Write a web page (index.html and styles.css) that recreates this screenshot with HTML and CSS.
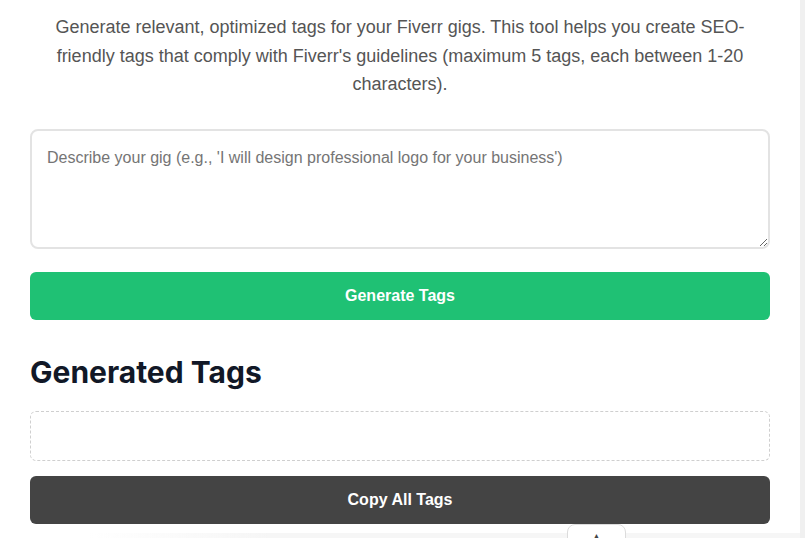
FILE: index.html
```html
<!DOCTYPE html>
<html lang="en">
<head>
<meta charset="utf-8">
<title>Fiverr Tag Generator</title>
<link rel="stylesheet" href="styles.css">
</head>
<body>
<main class="tool">
  <p class="intro">Generate relevant, optimized tags for your Fiverr gigs. This tool helps you create SEO-friendly tags that comply with Fiverr's guidelines (maximum 5 tags, each between 1-20 characters).</p>
  <textarea class="gig-input" placeholder="Describe your gig (e.g., 'I will design professional logo for your business')"></textarea>
  <button class="btn btn-generate" type="button">Generate Tags</button>
  <h2 class="result-title">Generated Tags</h2>
  <div class="tag-box"></div>
  <button class="btn btn-copy" type="button">Copy All Tags</button>
</main>
<div class="bottom-shade"></div>
<button class="back-top" type="button" aria-label="Back to top">&#9650;</button>
<div class="side-strip"></div>
</body>
</html>
```
FILE: styles.css
```css
* { box-sizing: border-box; }
html, body { margin: 0; padding: 0; background: #fff; overflow: hidden; }
body { font-family: "Liberation Sans", Arial, sans-serif; height: 538px; }

.tool {
  width: 740px;
  margin-left: 30px;
  padding-top: 13px;
  display: flex;
  flex-direction: column;
}

.intro {
  margin: 0 0 30px;
  font-size: 18px;
  line-height: 28.5px;
  color: #555;
  text-align: center;
}

.gig-input {
  display: block;
  width: 740px;
  height: 120px;
  border: 2px solid #e3e3e3;
  border-radius: 8px;
  padding: 18px 15px 15px;
  font-family: "Liberation Sans", Arial, sans-serif;
  font-size: 16px;
  color: #333;
  resize: vertical;
  margin: 0 0 23px;
}
.gig-input::placeholder { color: #757575; }

.btn {
  display: block;
  width: 740px;
  height: 48px;
  border: 0;
  border-radius: 6px;
  color: #fff;
  font-family: "Liberation Sans", Arial, sans-serif;
  font-weight: bold;
  font-size: 16px;
}
.btn-generate { background: #1fc174; }
.btn-copy { background: #444; }

.result-title {
  margin: 34px 0 21px;
  font-family: Inter, "Liberation Sans", sans-serif;
  font-weight: 700;
  font-size: 30px;
  line-height: 36px;
  color: #111827;
}

.tag-box {
  height: 50px;
  border: 1px dashed #cfcfcf;
  border-radius: 6px;
  margin-bottom: 15px;
}

.bottom-shade {
  position: fixed;
  left: 90px;
  right: 5px;
  bottom: 0;
  height: 5px;
  background: linear-gradient(to right, rgba(245,245,245,0), #f6f6f6 25%, #f6f6f6);
}

.back-top {
  position: fixed;
  left: 567px;
  top: 524px;
  width: 59px;
  height: 30px;
  background: #fff;
  border: 1px solid #dcdcdc;
  border-radius: 8px;
  color: #444;
  font-size: 12px;
  line-height: 1;
  padding: 6px 0 0;
  display: flex;
  justify-content: center;
  align-items: flex-start;
}

.side-strip {
  position: fixed;
  top: 0;
  right: 0;
  width: 5px;
  height: 100%;
  background: #f0f0f0;
}
```
